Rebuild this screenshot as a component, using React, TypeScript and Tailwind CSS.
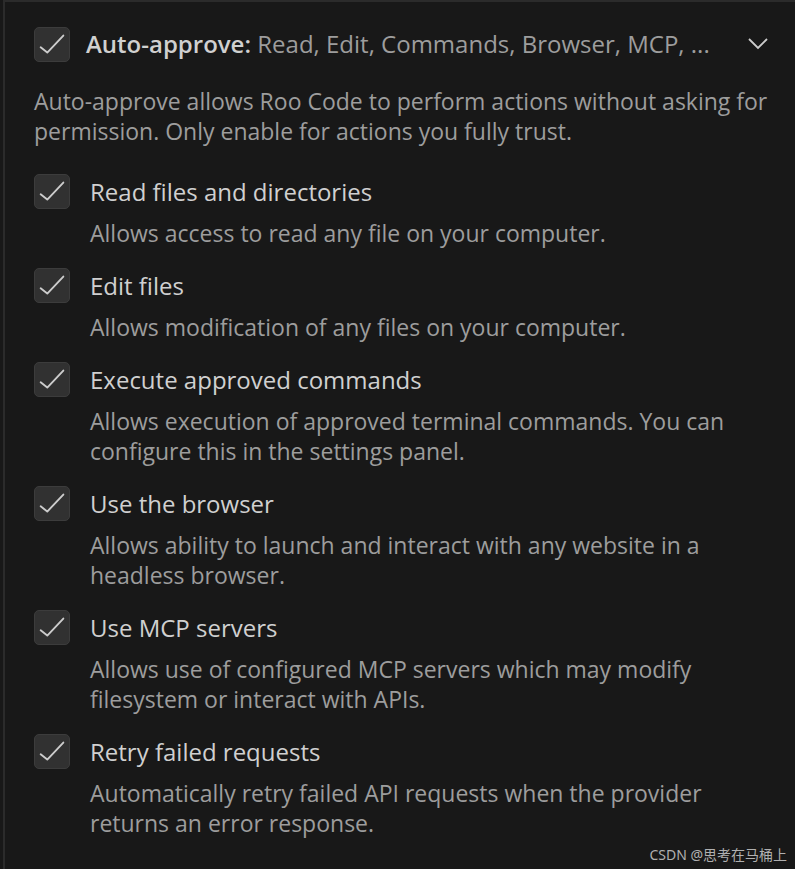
import { ReactNode } from 'react';

const items = [
  {
    title: 'Read files and directories',
    desc: 'Allows access to read any file on your computer.',
  },
  {
    title: 'Edit files',
    desc: 'Allows modification of any files on your computer.',
  },
  {
    title: 'Execute approved commands',
    desc: 'Allows execution of approved terminal commands. You can configure this in the settings panel.',
  },
  {
    title: 'Use the browser',
    desc: 'Allows ability to launch and interact with any website in a headless browser.',
  },
  {
    title: 'Use MCP servers',
    desc: 'Allows use of configured MCP servers which may modify filesystem or interact with APIs.',
  },
  {
    title: 'Retry failed requests',
    desc: 'Automatically retry failed API requests when the provider returns an error response.',
  },
];

const CheckBox = () => (
  <div className="flex h-[35px] w-[36px] shrink-0 items-center justify-center rounded-[5px] border border-[#3c3c3c] bg-[#313131]">
    <svg width="36" height="35" viewBox="0 0 36 35" fill="none">
      <path d="M6 20.5 L13 26 L30 8" stroke="#cccccc" strokeWidth="2" strokeLinecap="round" strokeLinejoin="round" />
    </svg>
  </div>
);

const Item = ({ title, children }: { title: string; children: ReactNode }) => (
  <div className="flex gap-[20px]">
    <CheckBox />
    <div className="flex flex-col">
      <div className="flex h-[36px] items-center text-[24px] text-[#d0d0d0]">{title}</div>
      <p className="mt-[8px] text-[23px] leading-[30px] text-[#9d9d9d]">{children}</p>
    </div>
  </div>
);

const App = () => {
  return (
    <div
      className="relative h-[869px] w-[795px] overflow-hidden bg-[#181818]"
      style={{ fontFamily: '"Open Sans", "Noto Sans", sans-serif' }}
    >
      <div className="ml-[3px] h-full border-l-2 border-t-2 border-[#2b2b2b] pl-[29px] pr-[20px] pt-[24px]">
        {/* header */}
        <div className="flex h-[36px] items-center">
          <CheckBox />
          <div className="ml-[16px] flex-1 whitespace-nowrap text-[24px]">
            <span className="font-semibold text-[#d0d0d0]">Auto-approve: </span>
            <span className="text-[#9d9d9d]">Read, Edit, Commands, Browser, MCP, ...</span>
          </div>
          <svg className="ml-[10px] mr-[6px]" width="22" height="14" viewBox="0 0 22 14" fill="none">
            <path d="M2 2 L11 11 L20 2" stroke="#cccccc" strokeWidth="1.8" />
          </svg>
        </div>

        <p className="mt-[24px] text-[23px] leading-[30px] text-[#9d9d9d]">
          Auto-approve allows Roo Code to perform actions without asking for permission. Only enable for actions you
          fully trust.
        </p>

        <div className="mt-[28px] flex flex-col gap-[20px]">
          {items.map((it) => (
            <Item key={it.title} title={it.title}>
              {it.desc}
            </Item>
          ))}
        </div>
      </div>

      <div
        className="absolute bottom-[4px] right-[8px] text-[14px] text-[#b0b0b0]"
        style={{ fontFamily: '"Noto Sans", "Noto Sans CJK SC", sans-serif' }}
      >
        CSDN @思考在马桶上
      </div>
    </div>
  );
};

export default App;
